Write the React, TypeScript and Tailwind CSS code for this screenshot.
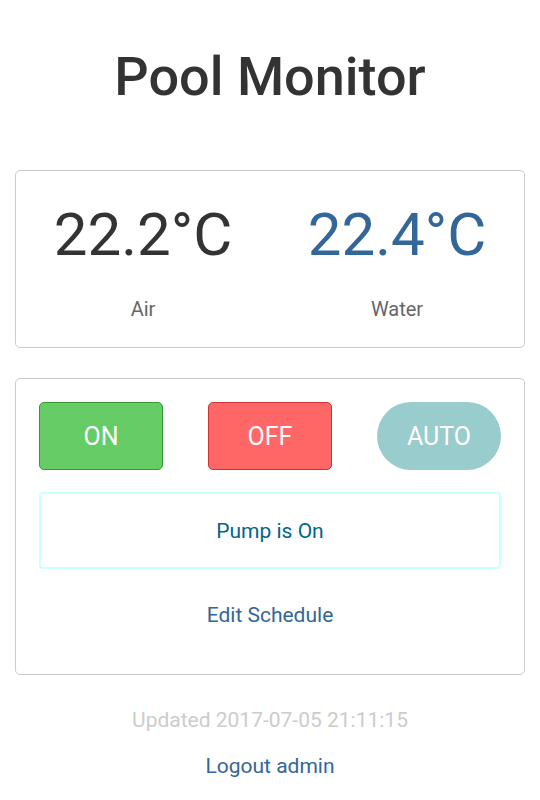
import React from 'react';

const App: React.FC = () => {
  return (
    <div className="min-h-[800px] bg-white px-[15px] font-['Roboto',sans-serif] text-[#333]">
      <h1 className="pt-[42px] text-center text-[54px] leading-[70px] font-medium text-[#333]">Pool Monitor</h1>

      <div className="mt-[58px] h-[178px] rounded-[5px] border border-[#ccc] grid grid-cols-2">
        <div className="flex flex-col items-center pt-[24px]">
          <span className="text-[60px] leading-[80px] font-normal text-[#333]">22.2°C</span>
          <span className="mt-[22px] text-[20px] leading-[24px] text-[#666]">Air</span>
        </div>
        <div className="flex flex-col items-center pt-[24px]">
          <span className="text-[60px] leading-[80px] font-normal text-[#336699]">22.4°C</span>
          <span className="mt-[22px] text-[20px] leading-[24px] text-[#666]">Water</span>
        </div>
      </div>

      <div className="mt-[30px] h-[297px] rounded-[5px] border border-[#ccc] px-[23px] pt-[23px]">
        <div className="flex justify-between">
          <button className="h-[68px] w-[124px] rounded-[5px] border border-[#339933] bg-[#66cc66] pt-[2px] text-[25px] text-white">ON</button>
          <button className="h-[68px] w-[124px] rounded-[5px] border border-[#cc3333] bg-[#ff6666] pt-[2px] text-[25px] text-white">OFF</button>
          <button className="h-[68px] w-[124px] rounded-full bg-[#99cccc] pt-[2px] text-[25px] text-white">AUTO</button>
        </div>
        <div className="mt-[22px] flex h-[77px] items-center justify-center rounded-[4px] border-2 border-[#ccffff] pt-[2px] text-[21px] text-[#006688]">
          Pump is On
        </div>
        <div className="mt-[33px] text-center text-[21px] leading-[26px] text-[#336699]">Edit Schedule</div>
      </div>

      <div className="mt-[32px] text-center text-[21px] leading-[26px] text-[#ccc]">Updated 2017-07-05 21:11:15</div>
      <div className="mt-[20px] text-center text-[21px] leading-[26px] text-[#336699]">Logout admin</div>
    </div>
  );
};

export default App;
